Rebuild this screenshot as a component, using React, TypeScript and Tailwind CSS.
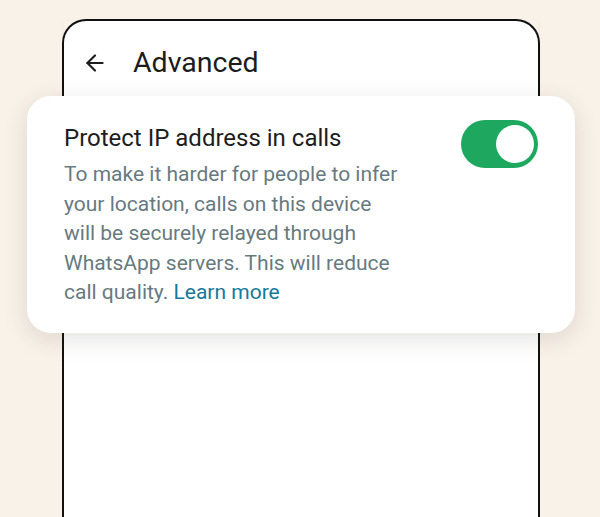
import { ArrowLeft } from 'lucide-react';

/**
 * 고급 설정 화면 - 통화 시 IP 주소 보호 카드
 */
export default function App() {
  return (
    <div
      className="relative h-[517px] w-[600px] overflow-hidden bg-[#f9f2e9]"
      style={{ fontFamily: 'Roboto, "Noto Sans", sans-serif' }}
    >
      {/* 휴대폰 프레임 */}
      <div className="ml-[62px] mt-[19px] h-[540px] w-[478px] rounded-t-[24px] border-2 border-b-0 border-[#111] bg-white">
        <div className="flex h-[84px] items-center gap-[25px] pl-[18px] shadow-[0_2px_6px_rgba(0,0,0,0.05)]">
          <ArrowLeft className="h-[26px] w-[26px] text-[#1c1c1c]" strokeWidth={2} />
          <span className="text-[28.5px] text-[#1c1c1c]">Advanced</span>
        </div>
      </div>

      {/* 설정 카드 */}
      <div className="absolute left-[27px] top-[96px] flex w-[548px] items-start justify-between rounded-[24px] bg-white pb-[25px] pl-[37px] pr-[37px] pt-[27px] shadow-[0_6px_24px_rgba(60,50,40,0.14)]">
        <div className="w-[338px]">
          <div className="text-[24px] leading-[30px] text-[#1d1d1d]">Protect IP address in calls</div>
          <p className="mt-[7px] text-[21px] leading-[29.5px] text-[#677a7f]">
            To make it harder for people to infer your location, calls on this device will be securely
            relayed through WhatsApp servers. This will reduce call quality.{' '}
            <span className="text-[#15799a]">Learn more</span>
          </p>
        </div>
        <div className="-mt-[3px] flex h-[48px] w-[77px] items-center justify-end rounded-full bg-[#1ea85f] pr-[4px]">
          <div className="h-[38px] w-[38px] rounded-full bg-white" />
        </div>
      </div>
    </div>
  );
}
